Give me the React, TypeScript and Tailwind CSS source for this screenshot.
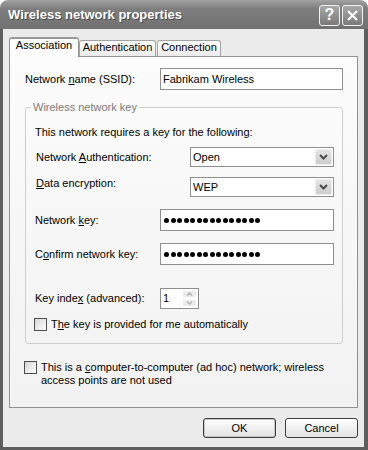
import { ReactNode } from 'react'

function Mn({ children }: { children: ReactNode }) {
  return <span className="underline decoration-1 underline-offset-[1px]">{children}</span>
}

function TitleButton({ children }: { children: ReactNode }) {
  return (
    <span className="flex h-[21px] w-[21px] items-center justify-center rounded-[3px] border border-[#f2f2f2] bg-linear-to-b from-[#a8a8a8] to-[#7a7a7a]">
      {children}
    </span>
  )
}

function Checkbox() {
  return <span className="h-[13px] w-[13px] shrink-0 border border-[#4e4e4e] bg-linear-to-br from-[#d6d6d6] to-white" />
}

function TextBox({ children, dots }: { children?: ReactNode; dots?: number }) {
  return (
    <div className="flex h-[22px] flex-1 items-center border border-[#8f8f8f] bg-white pl-[2px]">
      {dots ? (
        <div className="flex gap-[1.5px] pl-[1px]">
          {Array.from({ length: dots }).map((_, i) => (
            <span key={i} className="h-[5px] w-[5px] rounded-full bg-black" />
          ))}
        </div>
      ) : (
        children
      )}
    </div>
  )
}

function Select({ value }: { value: string }) {
  return (
    <div className="flex h-[20px] w-[144px] items-stretch border border-[#8f8f8f] bg-white p-[1px]">
      <span className="flex-1 pl-[1px] leading-[16px]">{value}</span>
      <span className="flex w-[17px] items-center justify-center rounded-[2px] border border-[#ececec] bg-linear-to-b from-[#e4e4e4] to-[#cdcdcd]">
        <svg width="9" height="6" viewBox="0 0 9 6">
          <path d="M1 1l3.5 3.5L8 1" fill="none" stroke="#4a4a4a" strokeWidth="2" />
        </svg>
      </span>
    </div>
  )
}

function Spinner() {
  return (
    <div className="flex h-[21px] w-[39px] border border-[#8f8f8f] bg-white p-[1px]">
      <span className="flex-1 pl-[1px] leading-[17px]">1</span>
      <div className="flex w-[15px] flex-col gap-px">
        <span className="flex flex-1 items-center justify-center rounded-[2px] border border-white bg-[#ececec]">
          <svg width="7" height="4" viewBox="0 0 7 4">
            <path d="M1 3.5l2.5-2.5L6 3.5" fill="none" stroke="#b4b4b4" strokeWidth="1.5" />
          </svg>
        </span>
        <span className="flex flex-1 items-center justify-center rounded-[2px] border border-white bg-[#ececec]">
          <svg width="7" height="4" viewBox="0 0 7 4">
            <path d="M1 0.5l2.5 2.5L6 0.5" fill="none" stroke="#b4b4b4" strokeWidth="1.5" />
          </svg>
        </span>
      </div>
    </div>
  )
}

export default function App() {
  return (
    <div className="h-[450px] w-[368px] bg-white font-['Liberation_Sans',Arial,sans-serif] text-[11px] leading-[13px] text-black">
      <div className="flex h-full flex-col overflow-hidden rounded-t-[8px]">
        {/* title bar */}
        <div className="flex h-[29px] shrink-0 items-center justify-between bg-linear-to-b from-[#a2a2a2] via-[#7e7e7e] via-30% to-[#717171] pl-[8px] pr-[5px] pt-px">
          <span className="text-[13px] font-bold leading-[16px] text-white [text-shadow:1px_1px_0_#4a4a4a]">
            Wireless network properties
          </span>
          <div className="flex gap-[2px]">
            <TitleButton>
              <span className="text-[16px] font-bold leading-[16px] text-white">?</span>
            </TitleButton>
            <TitleButton>
              <svg width="11" height="11" viewBox="0 0 11 11">
                <path d="M1 1l9 9M10 1l-9 9" stroke="white" strokeWidth="2.2" />
              </svg>
            </TitleButton>
          </div>
        </div>

        {/* client area */}
        <div className="flex flex-1 flex-col border-b-[3px] border-l-[3px] border-r-[4px] border-[#5e5e5e] bg-[#ebebeb] px-[6px] pb-[9px] pt-[8px]">
          <div className="flex h-[20px] items-end">
            <div className="relative z-10 h-[20px] w-[70px] rounded-t-[3px] border-x border-t-2 border-x-[#919191] border-t-[#9a9a9a] bg-[#fcfcfc] text-center">
              Association
            </div>
            <div className="mb-px h-[16px] w-[77px] rounded-t-[3px] border-x border-t border-[#a3a3a3] bg-linear-to-b from-white to-[#ebebeb] text-center">
              Authentication
            </div>
            <div className="mb-px ml-px h-[16px] w-[64px] rounded-t-[3px] border-x border-t border-[#a3a3a3] bg-linear-to-b from-white to-[#ebebeb] text-center">
              Connection
            </div>
          </div>

          {/* tab page */}
          <div className="-mt-px flex flex-1 flex-col border border-[#919191] bg-linear-to-b from-[#fcfcfc] to-[#f2f2f2] pl-[15px] pr-[14px] pt-[11px]">
            <div className="flex items-center">
              <span className="w-[135px] shrink-0">
                Network <Mn>n</Mn>ame (SSID):
              </span>
              <TextBox>Fabrikam Wireless</TextBox>
            </div>

            <fieldset className="mt-[11px] rounded-[3px] border border-[#cfcfcf]">
              <legend className="ml-[5px] px-[2px] text-[#7a7a7a]">Wireless network key</legend>
              <div className="pb-[12px] pl-[9px] pr-[8px] pt-[12px]">
                <div>This network requires a key for the following:</div>

                <div className="mt-[8px] flex h-[20px] items-start">
                  <span className="w-[155px] shrink-0 pl-px pt-[4px]">
                    Network <Mn>A</Mn>uthentication:
                  </span>
                  <Select value="Open" />
                </div>

                <div className="mt-[10px] flex h-[20px] items-start">
                  <span className="w-[155px] shrink-0 pl-px">
                    <Mn>D</Mn>ata encryption:
                  </span>
                  <Select value="WEP" />
                </div>

                <div className="mt-[12px] flex items-center">
                  <span className="w-[125px] shrink-0">
                    Network <Mn>k</Mn>ey:
                  </span>
                  <TextBox dots={15} />
                </div>

                <div className="mt-[12px] flex items-center">
                  <span className="w-[125px] shrink-0">
                    C<Mn>o</Mn>nfirm network key:
                  </span>
                  <TextBox dots={15} />
                </div>

                <div className="mt-[23px] flex items-center">
                  <span className="w-[125px] shrink-0">
                    Key inde<Mn>x</Mn> (advanced):
                  </span>
                  <Spinner />
                </div>

                <div className="-ml-px mt-[9px] flex items-center gap-[4px]">
                  <Checkbox />
                  <span>
                    T<Mn>h</Mn>e key is provided for me automatically
                  </span>
                </div>
              </div>
            </fieldset>

            <div className="-ml-px mt-[17px] flex items-start gap-[4px]">
              <Checkbox />
              <span>
                This is a <Mn>c</Mn>omputer-to-computer (ad hoc) network; wireless
                <br />
                access points are not used
              </span>
            </div>
          </div>

          <div className="mt-[10px] flex justify-end gap-[9px]">
            <button className="h-[20px] w-[73px] rounded-[3px] border border-[#3d3d3d] bg-linear-to-b from-white to-[#e2e2e2] shadow-[inset_0_0_0_1px_#c4c4c4]">
              OK
            </button>
            <button className="h-[20px] w-[73px] rounded-[3px] border border-[#3d3d3d] bg-linear-to-b from-white to-[#e2e2e2]">
              Cancel
            </button>
          </div>
        </div>
      </div>
    </div>
  )
}
